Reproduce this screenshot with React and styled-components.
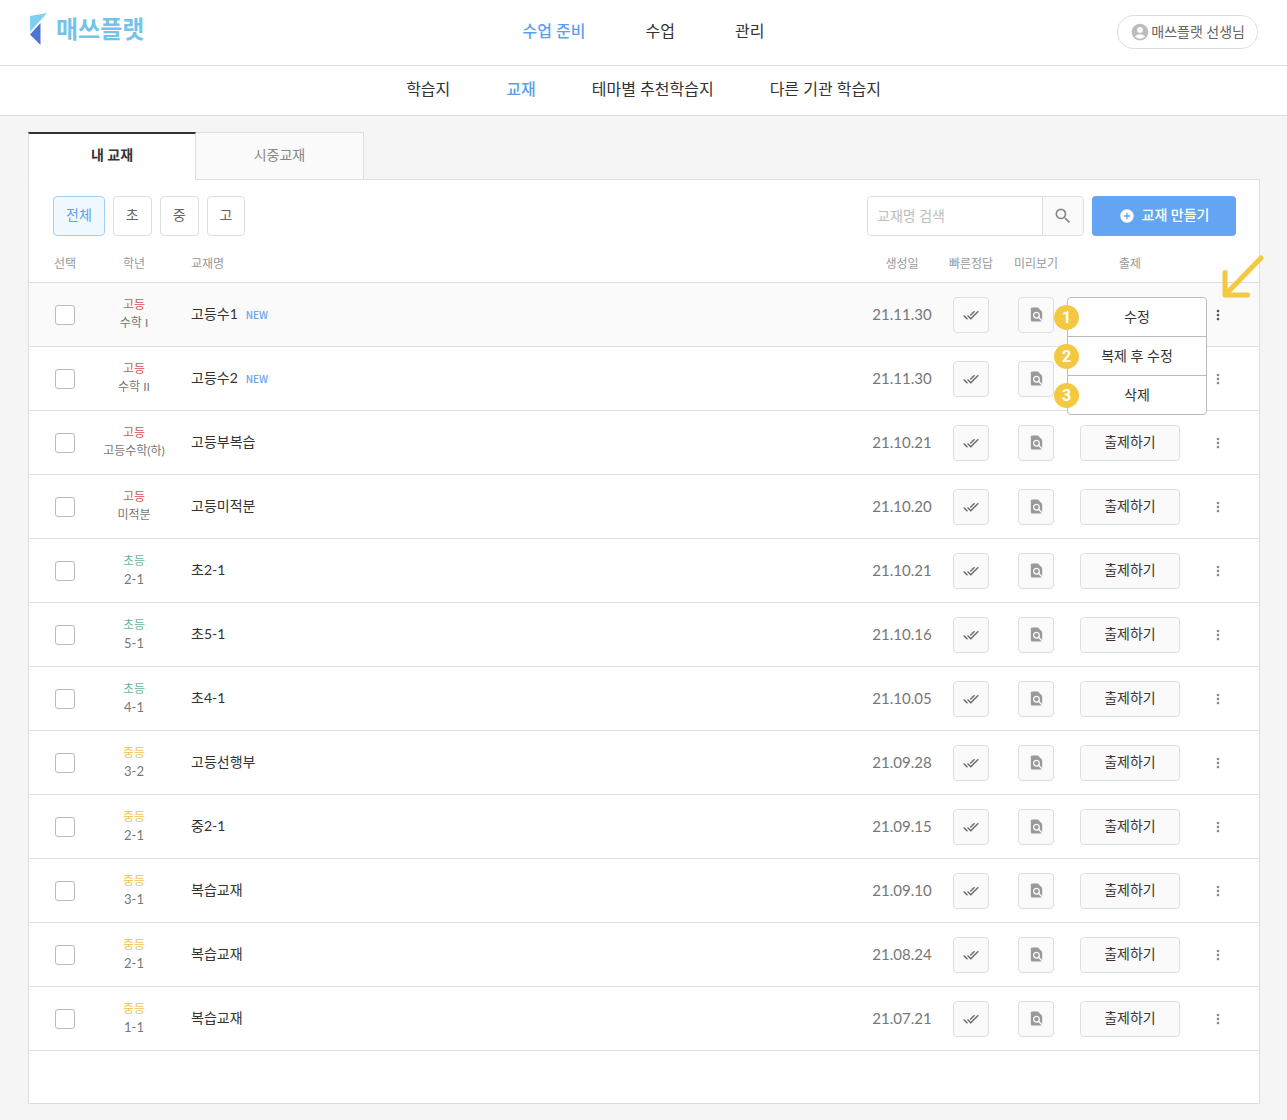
import {useState} from 'react';
import styled, {createGlobalStyle, css} from 'styled-components';
import {
  MdAccountCircle,
  MdAddCircle,
  MdDoneAll,
  MdFindInPage,
  MdMoreVert,
  MdSearch
} from 'react-icons/md';

const MAIN_MENU = ['수업 준비', '수업', '관리'];
const SUB_MENU = ['학습지', '교재', '테마별 추천학습지', '다른 기관 학습지'];
const TABS = ['내 교재', '시중교재'];
const FILTERS = ['전체', '초', '중', '고'];
const ROW_ACTIONS = ['수정', '복제 후 수정', '삭제'];

const LEVEL_COLORS = {
  '초등': '#67b99a',
  '중등': '#eec15c',
  '고등': '#d9534f'
};

const BOOKS = [
  {id: 1, level: '고등', grade: '수학 I', name: '고등수1', date: '21.11.30', isNew: true},
  {id: 2, level: '고등', grade: '수학 II', name: '고등수2', date: '21.11.30', isNew: true},
  {id: 3, level: '고등', grade: '고등수학(하)', name: '고등부복습', date: '21.10.21'},
  {id: 4, level: '고등', grade: '미적분', name: '고등미적분', date: '21.10.20'},
  {id: 5, level: '초등', grade: '2-1', name: '초2-1', date: '21.10.21'},
  {id: 6, level: '초등', grade: '5-1', name: '초5-1', date: '21.10.16'},
  {id: 7, level: '초등', grade: '4-1', name: '초4-1', date: '21.10.05'},
  {id: 8, level: '중등', grade: '3-2', name: '고등선행부', date: '21.09.28'},
  {id: 9, level: '중등', grade: '2-1', name: '중2-1', date: '21.09.15'},
  {id: 10, level: '중등', grade: '3-1', name: '복습교재', date: '21.09.10'},
  {id: 11, level: '중등', grade: '2-1', name: '복습교재', date: '21.08.24'},
  {id: 12, level: '중등', grade: '1-1', name: '복습교재', date: '21.07.21'}
];

function Logo() {
  return (
      <LogoLink href="#">
        <svg width="18" height="32" viewBox="0 0 18 32" aria-hidden="true">
          <path d="M1 3 L18 0 L1 19 Z" fill="#7fd0f3"/>
          <path d="M11.5 10 L11.5 32 L1 21.5 Z" fill="#4b74d0"/>
        </svg>
        매쓰플랫
      </LogoLink>
  );
}

function RowMenu() {
  return (
      <MenuList>
        {ROW_ACTIONS.map((action, index) => (
            <MenuItem key={action}>
              <StepBadge>{index + 1}</StepBadge>
              <MenuButton type="button">{action}</MenuButton>
            </MenuItem>
        ))}
      </MenuList>
  );
}

function BookRow({book, isOpen, onToggle}) {
  return (
      <Row $isOpen={isOpen}>
        <Cell><Checkbox type="checkbox" aria-label={`${book.name} 선택`}/></Cell>
        <TextCell>
          <Level $color={LEVEL_COLORS[book.level]}>{book.level}</Level>
          <Grade $isNumeric={/^\d/.test(book.grade)}>{book.grade}</Grade>
        </TextCell>
        <NameCell>
          {book.name}
          {book.isNew && <NewMark>NEW</NewMark>}
        </NameCell>
        <DateCell>{book.date}</DateCell>
        <Cell>
          <IconButton type="button" aria-label="빠른정답"><MdDoneAll size={16}/></IconButton>
        </Cell>
        <Cell>
          <IconButton type="button" aria-label="미리보기" $isLight><MdFindInPage size={17}/></IconButton>
        </Cell>
        <Cell><AssignButton type="button" $isHidden={isOpen}>출제하기</AssignButton></Cell>
        <MoreCell>
          <MoreWrapper>
            <MoreButton type="button" aria-label="더보기" $isOpen={isOpen} onClick={onToggle}>
              <MdMoreVert size={16}/>
            </MoreButton>
            {isOpen && <RowMenu/>}
            {isOpen && (
                <Arrow viewBox="0 0 44 44" aria-hidden="true">
                  <path d="M40 4 L4 41 M4 18.5 V41 H26.5"/>
                </Arrow>
            )}
          </MoreWrapper>
        </MoreCell>
      </Row>
  );
}

function App() {
  const [tab, setTab] = useState(TABS[0]);
  const [filter, setFilter] = useState(FILTERS[0]);
  const [openId, setOpenId] = useState(1);

  return (
      <>
        <GlobalStyle/>
        <Header>
          <Logo/>
          <Nav $gap={60}>
            {MAIN_MENU.map((item, index) => (
                <NavLink key={item} href="#" $isActive={index === 0}>{item}</NavLink>
            ))}
          </Nav>
          <UserButton type="button"><MdAccountCircle size={20}/>매쓰플랫 선생님</UserButton>
        </Header>
        <SubHeader>
          <Nav $gap={56}>
            {SUB_MENU.map((item, index) => (
                <NavLink key={item} href="#" $isActive={index === 1}>{item}</NavLink>
            ))}
          </Nav>
        </SubHeader>
        <Main>
          <TabList>
            {TABS.map(item => (
                <Tab key={item} type="button" $isActive={item === tab} onClick={() => setTab(item)}>
                  {item}
                </Tab>
            ))}
          </TabList>
          <Panel>
            <Toolbar>
              {FILTERS.map(item => (
                  <FilterButton key={item} type="button" $isActive={item === filter} onClick={() => setFilter(item)}>
                    {item}
                  </FilterButton>
              ))}
              <SearchForm onSubmit={e => e.preventDefault()}>
                <SearchInput type="text" placeholder="교재명 검색" aria-label="교재명 검색"/>
                <SearchButton type="submit" aria-label="검색"><MdSearch size={20}/></SearchButton>
              </SearchForm>
              <CreateButton type="button"><MdAddCircle size={16}/><span>교재 만들기</span></CreateButton>
            </Toolbar>
            <Table>
              <thead>
                <tr>
                  <HeadCell $width={72}>선택</HeadCell>
                  <HeadCell $width={66}>학년</HeadCell>
                  <HeadCell $isLeft>교재명</HeadCell>
                  <HeadCell $width={88}>생성일</HeadCell>
                  <HeadCell $width={50}>빠른정답</HeadCell>
                  <HeadCell $width={80}>미리보기</HeadCell>
                  <HeadCell $width={108}>출제</HeadCell>
                  <HeadCell $width={75}/>
                </tr>
              </thead>
              <tbody>
                {BOOKS.map(book => (
                    <BookRow
                        key={book.id}
                        book={book}
                        isOpen={book.id === openId}
                        onToggle={() => setOpenId(book.id === openId ? null : book.id)}
                    />
                ))}
              </tbody>
            </Table>
          </Panel>
        </Main>
      </>
  );
}

const GlobalStyle = createGlobalStyle`
    *, *::before, *::after {
      box-sizing: border-box;
    }
    body {
      margin: 0;
      background: #f5f5f5;
      color: #333;
      font-size: 14px;
      line-height: 20px;
    }
    body, button, input {
      font-family: Lato, "Noto Sans CJK KR", sans-serif;
    }
    button {
      padding: 0 0 2px;
      color: inherit;
      font-size: 14px;
      line-height: 20px;
      cursor: pointer;
    }
    `;

const Header =
    styled.header`
    display: grid;
    grid-template-columns: 1fr auto 1fr;
    align-items: center;
    height: 66px;
    padding: 0 29px 2px;
    background: #fff;
    border-bottom: 1px solid #dedede;
    `;

const LogoLink =
    styled.a`
    display: flex;
    align-items: center;
    gap: 9px;
    padding-bottom: 6px;
    color: #76c3e8;
    font-size: 24px;
    font-weight: 700;
    line-height: 32px;
    text-decoration: none;
    `;

const Nav =
    styled.nav`
    display: flex;
    gap: ${props => props.$gap}px;
    padding-bottom: 2px;
    `;

const NavLink =
    styled.a`
    color: ${props => props.$isActive ? '#5c9fee' : '#333'};
    font-size: 16px;
    font-weight: ${props => props.$isActive ? 500 : 400};
    line-height: 24px;
    text-decoration: none;
    `;

const UserButton =
    styled.button`
    display: flex;
    justify-self: end;
    align-items: center;
    gap: 1px;
    height: 34px;
    padding: 0 12px;
    background: #fff;
    border: 1px solid #dedede;
    border-radius: 17px;
    color: #666;

    svg {
      color: #bdbdbd;
    }
    `;

const SubHeader =
    styled.div`
    display: flex;
    justify-content: center;
    align-items: center;
    height: 50px;
    padding-bottom: 2px;
    background: #fff;
    border-bottom: 1px solid #dedede;
    `;

const Main =
    styled.main`
    padding: 16px 27px 16px 28px;
    `;

const TabList =
    styled.div`
    position: relative;
    display: flex;
    margin-bottom: -1px;
    `;

const Tab =
    styled.button`
    width: 168px;
    height: 48px;
    background: #fafafa;
    border: 1px solid #dedede;
    border-left: 0;
    color: #888;

    ${props => props.$isActive && css`
      padding-bottom: 4px;
      background: #fff;
      border-top: 2px solid #333;
      border-left: 1px solid #dedede;
      border-bottom-color: #fff;
      color: #333;
      font-weight: 700;
    `}
    `;

const Panel =
    styled.section`
    padding-bottom: 52px;
    background: #fff;
    border: 1px solid #dedede;
    `;

const Toolbar =
    styled.div`
    display: flex;
    gap: 8px;
    padding: 16px 23px 0 24px;
    `;

const FilterButton =
    styled.button`
    height: 40px;
    padding: 0 12px 2px;
    background: ${props => props.$isActive ? '#f0f9ff' : '#fff'};
    border: 1px solid ${props => props.$isActive ? '#a5d2f5' : '#dedede'};
    border-radius: 4px;
    color: ${props => props.$isActive ? '#5c9fee' : '#666'};
    `;

const SearchForm =
    styled.form`
    display: flex;
    width: 217px;
    height: 40px;
    margin-left: auto;
    border: 1px solid #dedede;
    border-radius: 4px;
    overflow: hidden;
    `;

const SearchInput =
    styled.input`
    flex: 1;
    min-width: 0;
    padding: 0 9px 2px;
    border: 0;
    font-size: 14px;

    &::placeholder {
      color: #bdbdbd;
    }
    `;

const SearchButton =
    styled.button`
    display: flex;
    justify-content: center;
    align-items: center;
    width: 41px;
    padding: 0;
    background: #fafafa;
    border: 0;
    border-left: 1px solid #dedede;
    color: #888;
    `;

const CreateButton =
    styled.button`
    display: flex;
    justify-content: center;
    align-items: center;
    gap: 7px;
    width: 144px;
    height: 40px;
    padding: 0;
    background: #64a5f3;
    border: 0;
    border-radius: 4px;
    color: #fff;
    font-weight: 500;

    span {
      padding-bottom: 2px;
    }
    `;

const Table =
    styled.table`
    width: 100%;
    table-layout: fixed;
    border-collapse: separate;
    border-spacing: 0;
    `;

const HeadCell =
    styled.th`
    width: ${props => props.$width ? `${props.$width}px` : 'auto'};
    height: 47px;
    padding: ${props => props.$isLeft ? '10px 24px 0' : '10px 0 0'};
    border-bottom: 1px solid #dedede;
    color: #999;
    font-size: 12px;
    font-weight: 400;
    text-align: ${props => props.$isLeft ? 'left' : 'center'};
    white-space: nowrap;
    `;

const Row =
    styled.tr`
    background: ${props => props.$isOpen ? '#fafafa' : '#fff'};
    `;

const Cell =
    styled.td`
    height: 64px;
    padding: 0;
    border-bottom: 1px solid #dedede;
    text-align: center;
    vertical-align: middle;
    `;

const TextCell =
    styled(Cell)`
    padding-bottom: 2px;
    `;

const NameCell =
    styled(Cell)`
    padding: 0 24px 2px;
    text-align: left;
    `;

const DateCell =
    styled(TextCell)`
    color: #777;
    font-size: 15px;
    line-height: 18px;
    `;

const MoreCell =
    styled(Cell)`
    padding-left: 24px;
    `;

const Checkbox =
    styled.input`
    display: block;
    width: 20px;
    height: 20px;
    margin: 0 auto;
    background: #fff;
    border: 1px solid #bbb;
    border-radius: 3px;
    appearance: none;

    &:checked {
      background: #64a5f3;
    }
    `;

const Level =
    styled.div`
    color: ${props => props.$color};
    font-size: 12px;
    line-height: 18px;
    `;

const Grade =
    styled.div`
    color: #777;
    font-size: ${props => props.$isNumeric ? 13 : 12}px;
    line-height: 18px;
    white-space: nowrap;
    `;

const NewMark =
    styled.span`
    margin-left: 8px;
    color: #64a5f3;
    font-family: "Noto Sans CJK KR", sans-serif;
    font-size: 10px;
    font-weight: 500;
    line-height: 10px;
    `;

const IconButton =
    styled.button`
    display: flex;
    justify-content: center;
    align-items: center;
    width: 36px;
    height: 36px;
    margin: 0 auto;
    padding: 0;
    background: #fafafa;
    border: 1px solid #dedede;
    border-radius: 4px;
    color: ${props => props.$isLight ? '#999' : '#666'};
    `;

const AssignButton =
    styled.button`
    width: 100px;
    height: 36px;
    background: #fafafa;
    border: 1px solid #dedede;
    border-radius: 4px;
    visibility: ${props => props.$isHidden ? 'hidden' : 'visible'};
    `;

const MoreWrapper =
    styled.div`
    position: relative;
    width: 20px;
    `;

const MoreButton =
    styled.button`
    display: flex;
    justify-content: center;
    align-items: center;
    width: 20px;
    height: 20px;
    padding: 0;
    background: none;
    border: 0;
    color: ${props => props.$isOpen ? '#555' : '#888'};
    `;

const MenuList =
    styled.ul`
    position: absolute;
    top: -8px;
    right: 21px;
    z-index: 1;
    width: 140px;
    margin: 0;
    padding: 0;
    background: #fff;
    border: 1px solid #bbb;
    border-radius: 4px;
    list-style: none;
    `;

const MenuItem =
    styled.li`
    position: relative;

    & + & {
      border-top: 1px solid #bbb;
    }
    `;

const MenuButton =
    styled.button`
    width: 100%;
    height: 38px;
    padding: 0;
    background: none;
    border: 0;
    `;

const StepBadge =
    styled.span`
    position: absolute;
    top: 7px;
    left: -14px;
    width: 25px;
    height: 25px;
    background: #f5c842;
    border-radius: 50%;
    color: #fff;
    font-family: Roboto, sans-serif;
    font-size: 16px;
    font-weight: 700;
    line-height: 25px;
    text-align: center;
    `;

const Arrow =
    styled.svg`
    position: absolute;
    top: -51px;
    left: 13px;
    width: 44px;
    height: 44px;
    fill: none;
    stroke: #f5c842;
    stroke-width: 5;
    stroke-linecap: round;
    stroke-linejoin: round;
    pointer-events: none;
    `;

export default App;
